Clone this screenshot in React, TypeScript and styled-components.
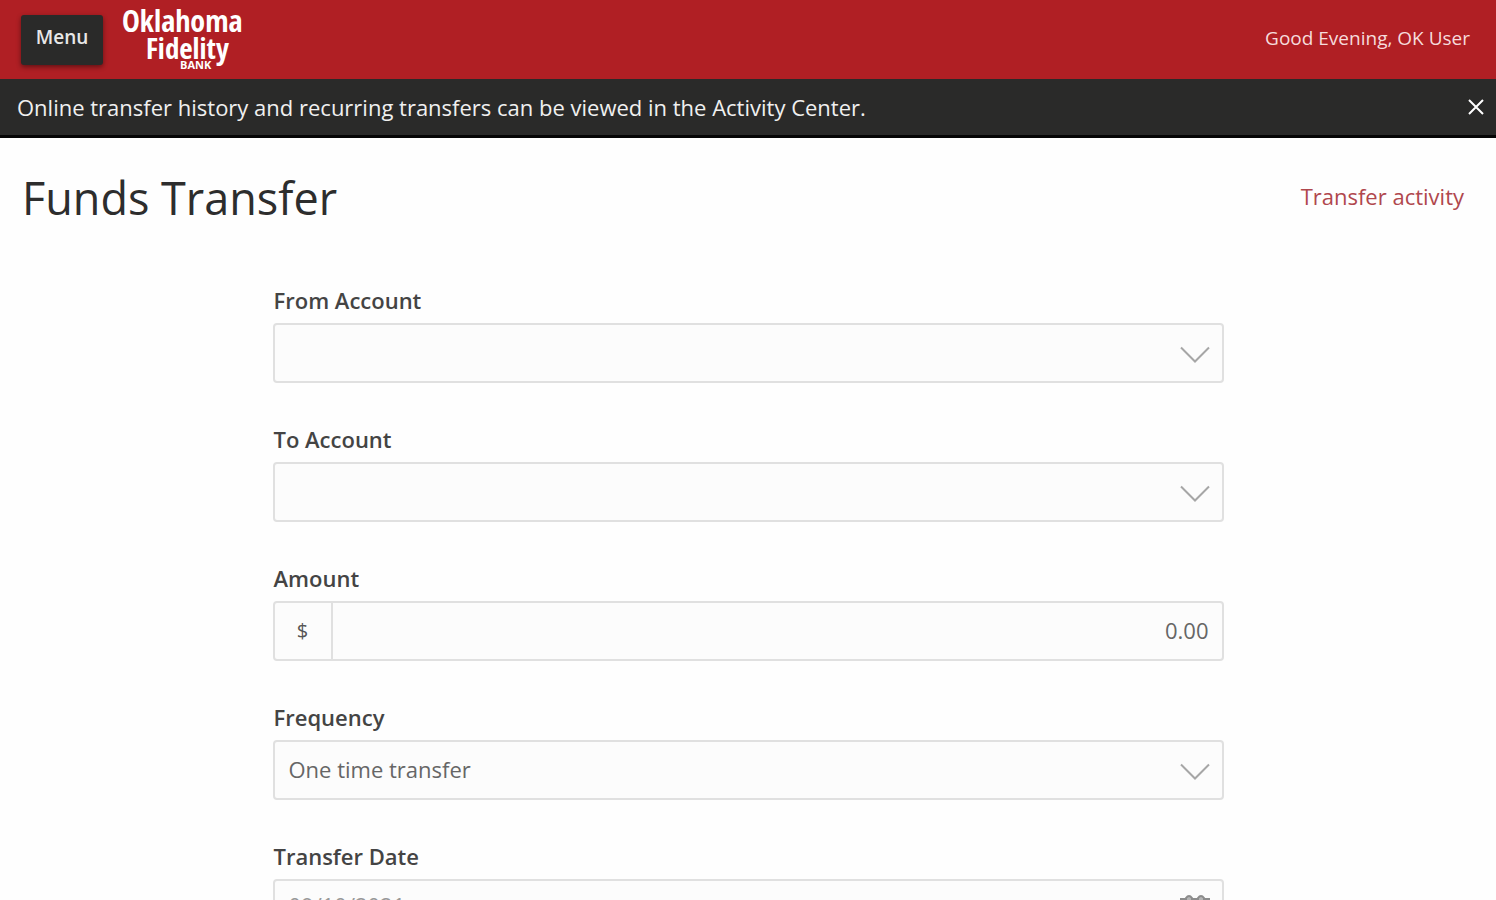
import React, { useState } from "react";
import styled, { createGlobalStyle, css } from "styled-components";

const GlobalStyle = createGlobalStyle`
  *, *::before, *::after { box-sizing: border-box; }
  body {
    margin: 0;
    background: #fefefe;
    color: #2d2d2d;
    font-family: "Open Sans", "Noto Sans", sans-serif;
    font-size: 22px;
    line-height: 30px;
  }
`;

const Header = styled.header`
  display: flex;
  align-items: center;
  height: 79px;
  padding: 0 26px 0 21px;
  background: #b01f24;
`;

const MenuButton = styled.button`
  width: 82px;
  height: 50px;
  padding: 0 0 6px;
  border: 0;
  border-radius: 3px;
  background: #2a2a29;
  box-shadow: 0 2px 5px rgba(0, 0, 0, 0.45);
  color: #e8e8e8;
  font: 600 19px/30px "Open Sans", "Noto Sans", sans-serif;
  cursor: pointer;
`;

const LogoLink = styled.a`
  display: block;
  height: 79px;
  margin-left: 18px;
`;

const LogoText = styled.text<{ $wide?: boolean }>`
  fill: #ffffff;
  font-family: ${(p) => (p.$wide ? '"Open Sans"' : '"Open Sans Condensed"')}, "Open Sans", sans-serif;
  font-weight: 700;
`;

const Greeting = styled.span`
  margin-left: auto;
  padding-bottom: 4px;
  color: #f6dcdc;
  font-size: 19px;
`;

const Notice = styled.div`
  display: flex;
  align-items: center;
  justify-content: space-between;
  height: 59px;
  padding: 0 12px 0 17px;
  border-bottom: 3px solid #050505;
  background: #2a2a29;
  color: #f0f0f0;
`;

const CloseButton = styled.button`
  display: flex;
  padding: 0;
  border: 0;
  background: transparent;
  color: #ffffff;
  cursor: pointer;
`;

const TitleRow = styled.div`
  display: flex;
  align-items: center;
  justify-content: space-between;
  padding: 28px 32px 0 22px;
`;

const Title = styled.h1`
  margin: 0;
  color: #2d2d2d;
  font-size: 45px;
  font-weight: 400;
  line-height: 64px;
`;

const ActivityLink = styled.a`
  padding-bottom: 4px;
  color: #b0474d;
  text-decoration: none;
`;

const Form = styled.form`
  display: grid;
  gap: 41px;
  max-width: 951px;
  margin: 0 auto;
  padding: 55px 0 48px;
`;

const Field = styled.div`
  display: grid;
  gap: 8px;
`;

const Label = styled.label`
  padding-left: 1px;
  color: #444444;
  font-weight: 600;
`;

const Control = styled.div`
  display: flex;
  position: relative;
  height: 60px;
  overflow: hidden;
  border: 2px solid #e0e0e0;
  border-radius: 4px;
  background: #fcfcfc;
`;

const entry = css`
  flex: 1;
  min-width: 0;
  width: 100%;
  padding: 0 13px 2px 14px;
  border: 0;
  outline: 0;
  background: transparent;
  color: #666666;
  font: inherit;
`;

const Select = styled.select`
  ${entry}
  appearance: none;
`;

const Input = styled.input<{ $align?: "left" | "right" }>`
  ${entry}
  text-align: ${(p) => p.$align ?? "left"};
`;

const DateInput = styled(Input)`
  padding-bottom: 8px;
  color: #999999;
`;

const Prefix = styled.span`
  display: grid;
  place-items: center;
  width: 58px;
  border-right: 2px solid #e0e0e0;
  color: #555555;
  font-size: 20px;
`;

const ControlIcon = styled.svg`
  position: absolute;
  right: 12px;
  top: 13px;
  pointer-events: none;
`;

const Chevron = () => (
  <ControlIcon width="30" height="30" viewBox="0 0 30 30" fill="none" stroke="#a6a6a6" strokeWidth="2" aria-hidden="true">
    <path d="M1 9.5 15 23.5 29 9.5" />
  </ControlIcon>
);

const Calendar = () => (
  <ControlIcon width="30" height="32" viewBox="0 0 30 32" fill="none" stroke="#8c8c8c" strokeWidth="2" aria-hidden="true">
    <path d="M5 5H1v25h28V5h-4M12 5h6M1 12h28" />
    <path d="M6 8V4q3-4 6 0v4M18 8V4q3-4 6 0v4" fill="#b5b5b5" />
    <path d="M7 17h3M13.500 17h3M20 17h3M7 23h3M13.500 23h3M20 23h3" />
  </ControlIcon>
);

const Logo = () => (
  <LogoLink href="#" aria-label="Oklahoma Fidelity Bank">
    <svg width="130" height="79" viewBox="0 0 130 79" aria-hidden="true">
      <LogoText x="1" y="32" fontSize="30">Oklahoma</LogoText>
      <LogoText x="25" y="59" fontSize="29">Fidelity</LogoText>
      <LogoText $wide x="59" y="69" fontSize="11">BANK</LogoText>
    </svg>
  </LogoLink>
);

interface SelectFieldProps {
  id: string;
  label: string;
  options: string[];
}

const SelectField = ({ id, label, options }: SelectFieldProps) => (
  <Field>
    <Label htmlFor={id}>{label}</Label>
    <Control>
      <Select id={id}>
        {options.map((o) => (
          <option key={o}>{o}</option>
        ))}
      </Select>
      <Chevron />
    </Control>
  </Field>
);

export default function App() {
  const [noticeOpen, setNoticeOpen] = useState(true);

  return (
    <>
      <GlobalStyle />
      <Header>
        <MenuButton type="button">Menu</MenuButton>
        <Logo />
        <Greeting>Good Evening, OK User</Greeting>
      </Header>
      {noticeOpen && (
        <Notice role="status">
          <span>Online transfer history and recurring transfers can be viewed in the Activity Center.</span>
          <CloseButton type="button" aria-label="Close" onClick={() => setNoticeOpen(false)}>
            <svg width="16" height="16" viewBox="0 0 16 16" fill="none" stroke="currentColor" strokeWidth="2">
              <path d="M1 1 15 15M15 1 1 15" />
            </svg>
          </CloseButton>
        </Notice>
      )}
      <main>
        <TitleRow>
          <Title>Funds Transfer</Title>
          <ActivityLink href="#">Transfer activity</ActivityLink>
        </TitleRow>
        <Form>
          <SelectField id="from" label="From Account" options={[""]} />
          <SelectField id="to" label="To Account" options={[""]} />
          <Field>
            <Label htmlFor="amount">Amount</Label>
            <Control>
              <Prefix>$</Prefix>
              <Input id="amount" $align="right" inputMode="decimal" defaultValue="0.00" />
            </Control>
          </Field>
          <SelectField id="frequency" label="Frequency" options={["One time transfer"]} />
          <Field>
            <Label htmlFor="date">Transfer Date</Label>
            <Control>
              <DateInput id="date" defaultValue="09/10/2021" />
              <Calendar />
            </Control>
          </Field>
        </Form>
      </main>
    </>
  );
}
